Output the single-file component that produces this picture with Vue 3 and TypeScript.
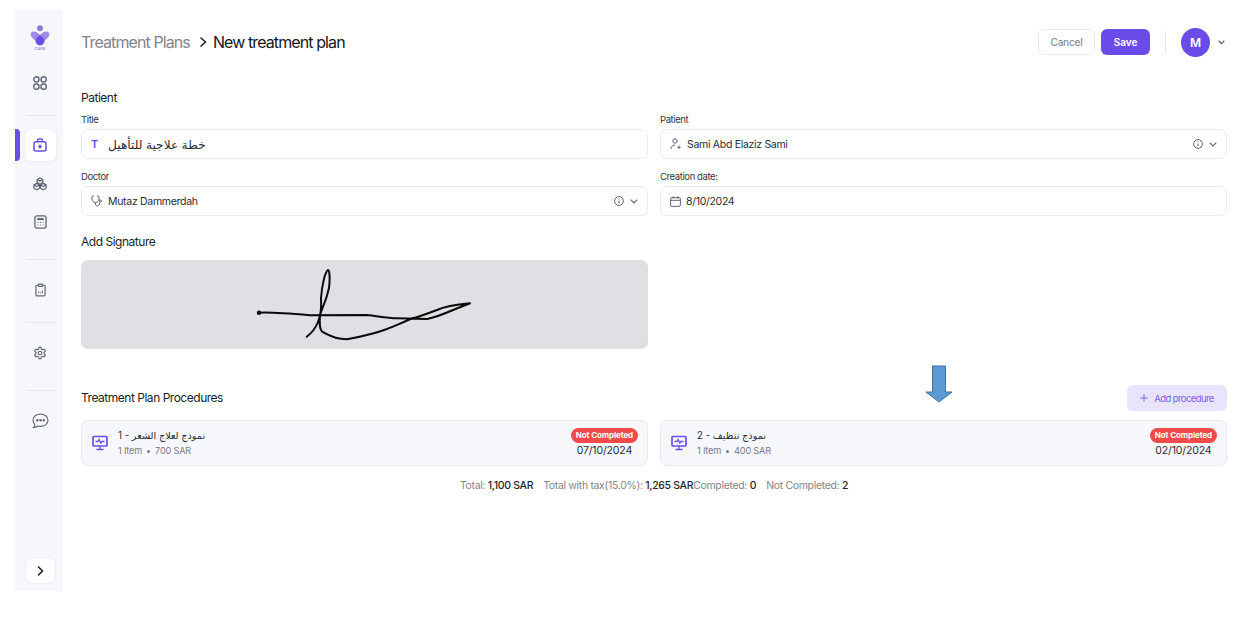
<script setup lang="ts">
interface Procedure {
  title: string
  meta: string
  date: string
}

const procedures: Procedure[] = [
  { title: 'نموذج لعلاج الشعر - 1', meta: '700 SAR', date: '07/10/2024' },
  { title: 'نموذج تنظيف - 2', meta: '400 SAR', date: '02/10/2024' }
]
</script>

<template>
  <div class="page">
    <aside class="sidebar">
      <svg class="logo" width="20" height="25" viewBox="0 0 20 25">
        <circle cx="10" cy="3.200" r="3" fill="#8f7ad8" />
        <path d="M.6 8.600C1.500 6.300 5 6 7 7.500c1.200.8 2.200 1.500 3 2.300-2.200 1.800-3.800 3.400-4.200 5.700C3 14.300.2 11.500.6 8.600Z" fill="#a08ae6" />
        <path d="M19.400 8.600C18.500 6.300 15 6 13 7.500c-1.200.8-2.200 1.500-3 2.300 2.200 1.800 3.800 3.400 4.200 5.700 2.800-1.200 5.600-4 5.200-6.900Z" fill="#a08ae6" />
        <path d="M10 9.800c2.400 2 4.600 3.700 4.600 6a4.600 4.600 0 0 1-9.200 0c0-2.300 2.200-4 4.600-6Z" fill="#6a4de8" />
        <text x="10" y="24.500" text-anchor="middle" class="logo-text">CARE</text>
      </svg>

      <svg class="nav-icon grid-icon" width="14" height="14" viewBox="0 0 14 14">
        <g fill="none" stroke="#5f6472" stroke-width="1.400">
          <circle cx="3.400" cy="3.400" r="2.600" />
          <circle cx="10.600" cy="3.400" r="2.600" />
          <rect x=".8" y="8" width="5.200" height="5.200" rx="2.200" />
          <rect x="8" y="8" width="5.200" height="5.200" rx="2.200" />
        </g>
      </svg>
      <div class="divider"></div>

      <div class="active-item">
        <span class="active-bar"></span>
        <div class="active-tile">
          <svg width="14" height="14" viewBox="0 0 14 14" fill="none" stroke="#6a4de8" stroke-width="1.500">
            <rect x="1" y="3.700" width="12" height="9.300" rx="2" />
            <path d="M4.500 3.500V2.300C4.500 1.500 5 1 5.800 1h2.400c.8 0 1.300.5 1.300 1.300v1.200" />
            <path d="M7 6.500v4M5 8.500h4" stroke-width="1.400" />
          </svg>
        </div>
      </div>

      <svg class="nav-icon boxes" width="16" height="15" viewBox="0 0 17 16" fill="none" stroke="#5f6472" stroke-width="1.300">
        <path d="M8.500 1 11.500 2.700v3.300L8.500 7.700 5.500 6V2.700L8.500 1Z" />
        <path d="M5 6.800 8 8.500v3.400L5 13.600 2 11.900V8.500L5 6.800ZM12 6.800l3 1.700v3.400l-3 1.700-3-1.700V8.500l3-1.700Z" />
        <path d="M5.500 2.700 8.500 4.400l3-1.700M2 8.500 5 10.200 8 8.500M9 8.500l3 1.700 3-1.700" />
      </svg>

      <svg class="nav-icon calc" width="13" height="14" viewBox="0 0 14 15" fill="none" stroke="#5f6472" stroke-width="1.400">
        <rect x="1" y="1" width="12" height="13" rx="2.200" />
        <rect x="3.500" y="3.300" width="7" height="2.200" fill="#5f6472" stroke="none" />
        <path d="M3.800 8h1M6.500 8h1M9.200 8h1M3.800 10.800h1M6.500 10.800h1M9.200 10.800h1" stroke-width="1.200" />
      </svg>
      <div class="divider wide-divider"></div>

      <svg class="nav-icon after-divider" width="11" height="14" viewBox="0 0 12 15" fill="none" stroke="#5f6472" stroke-width="1.300">
        <path d="M3.500 2.300H2.200C1.400 2.300 1 2.800 1 3.500v9.300c0 .8.400 1.200 1.200 1.200h7.600c.8 0 1.200-.4 1.200-1.200V3.500c0-.7-.4-1.200-1.200-1.200H8.500" />
        <rect x="3.500" y="1" width="5" height="2.600" rx="1" />
        <path d="M4 11V9M6 11V10M8 11V8" stroke-width="1.100" />
      </svg>
      <div class="divider"></div>

      <svg class="nav-icon after-divider" width="14" height="14" viewBox="0 0 24 24" fill="none" stroke="#5f6472" stroke-width="2">
        <path d="M12.220 2h-.44a2 2 0 0 0-2 2v.18a2 2 0 0 1-1 1.730l-.43.250a2 2 0 0 1-2 0l-.150-.080a2 2 0 0 0-2.730.730l-.220.380a2 2 0 0 0 .730 2.730l.150.100a2 2 0 0 1 1 1.720v.510a2 2 0 0 1-1 1.740l-.150.090a2 2 0 0 0-.730 2.730l.220.380a2 2 0 0 0 2.730.730l.150-.080a2 2 0 0 1 2 0l.430.250a2 2 0 0 1 1 1.730V20a2 2 0 0 0 2 2h.44a2 2 0 0 0 2-2v-.180a2 2 0 0 1 1-1.730l.430-.250a2 2 0 0 1 2 0l.150.080a2 2 0 0 0 2.730-.730l.220-.390a2 2 0 0 0-.730-2.730l-.150-.080a2 2 0 0 1-1-1.740v-.500a2 2 0 0 1 1-1.740l.150-.090a2 2 0 0 0 .730-2.730l-.220-.380a2 2 0 0 0-2.730-.730l-.150.080a2 2 0 0 1-2 0l-.430-.250a2 2 0 0 1-1-1.730V4a2 2 0 0 0-2-2Z" />
        <circle cx="12" cy="12" r="3" />
      </svg>
      <div class="divider wide-divider"></div>

      <svg class="nav-icon chat" width="17" height="16" viewBox="0 0 17 16" fill="none" stroke="#5f6472" stroke-width="1.100">
        <path d="M8.500 1C4.400 1 1 3.700 1 7.200c0 1.600.7 3 1.900 4.100-.1 1.200-.6 2.500-1.400 3.200 1.700 0 3.200-.6 4.200-1.500.9.300 1.800.4 2.800.4 4.100 0 7.500-2.700 7.500-6.200S12.600 1 8.500 1Z" />
        <circle cx="5.300" cy="7.200" r=".7" fill="#5f6472" />
        <circle cx="8.500" cy="7.200" r=".7" fill="#5f6472" />
        <circle cx="11.700" cy="7.200" r=".7" fill="#5f6472" />
      </svg>

      <button class="expand" type="button">
        <svg width="10" height="10" viewBox="0 0 10 10" fill="none" stroke="#1d1f26" stroke-width="1.600" stroke-linecap="round" stroke-linejoin="round">
          <path d="M3.500 1l4 4-4 4" />
        </svg>
      </button>
    </aside>

    <main class="main">
      <header class="topbar">
        <div class="crumbs">
          <span class="crumb-parent">Treatment Plans</span>
          <svg class="crumb-sep" width="10" height="12" viewBox="0 0 10 12" fill="none" stroke="#1d1f26" stroke-width="1.500">
            <path d="M2.500 1.500 7.500 6l-5 4.500" />
          </svg>
          <span class="crumb-current">New treatment plan</span>
        </div>
        <div class="actions">
          <button class="btn btn-cancel" type="button">Cancel</button>
          <button class="btn btn-save" type="button">Save</button>
          <span class="action-sep"></span>
          <span class="avatar">M</span>
          <svg width="7" height="5" viewBox="0 0 7 5" fill="none" stroke="#5f6472" stroke-width="1.300">
            <path d="M.7.800 3.500 3.600 6.300.8" />
          </svg>
        </div>
      </header>

      <h2 class="section-title patient-title">Patient</h2>
      <div class="form-grid patient-grid">
        <div class="field">
          <label>Title</label>
          <div class="input">
            <span class="t-icon">T</span>
            <span class="arabic-value">خطة علاجية للتأهيل</span>
          </div>
        </div>
        <div class="field">
          <label>Patient</label>
          <div class="input">
            <svg class="lead" width="12" height="12" viewBox="0 0 12 12" fill="none" stroke="#5f6472" stroke-width="1">
              <circle cx="5" cy="3" r="2.200" />
              <path d="M1 11c0-2.300 1.500-4 4-4M9 7.500v3.500M7.300 9.300h3.400" />
            </svg>
            <span class="value">Sami Abd Elaziz Sami</span>
            <svg class="info" width="10" height="10" viewBox="0 0 10 10" fill="none" stroke="#5f6472" stroke-width="1">
              <circle cx="5" cy="5" r="4.400" />
              <path d="M5 4.500v2.700M5 2.600v.8" />
            </svg>
            <svg class="chev" width="8" height="5" viewBox="0 0 8 5" fill="none" stroke="#5f6472" stroke-width="1.100">
              <path d="M.7.700 4 4 7.300.7" />
            </svg>
          </div>
        </div>
        <div class="field">
          <label>Doctor</label>
          <div class="input">
            <svg class="lead" width="12" height="12" viewBox="0 0 12 12" fill="none" stroke="#5f6472" stroke-width="1">
              <path d="M3 1H2C1.400 1 1 1.400 1 2v2c0 2 1.500 3.500 3.500 3.500S8 6 8 4V2c0-.6-.4-1-1-1H6" />
              <path d="M4.500 7.500V9c0 1.300 1 2 2 2s2-.7 2-2V7.500" />
              <circle cx="9.500" cy="6" r="1" />
            </svg>
            <span class="value">Mutaz Dammerdah</span>
            <svg class="info" width="10" height="10" viewBox="0 0 10 10" fill="none" stroke="#5f6472" stroke-width="1">
              <circle cx="5" cy="5" r="4.400" />
              <path d="M5 4.500v2.700M5 2.600v.8" />
            </svg>
            <svg class="chev" width="8" height="5" viewBox="0 0 8 5" fill="none" stroke="#5f6472" stroke-width="1.100">
              <path d="M.7.700 4 4 7.300.7" />
            </svg>
          </div>
        </div>
        <div class="field">
          <label>Creation date:</label>
          <div class="input">
            <svg class="lead" width="11" height="11" viewBox="0 0 11 11" fill="none" stroke="#5f6472" stroke-width="1">
              <rect x=".6" y="1.600" width="9.800" height="8.800" rx="1.500" />
              <path d="M.6 4.300h9.800M3.200.3v2.300M7.800.3v2.300" />
            </svg>
            <span class="value">8/10/2024</span>
          </div>
        </div>
      </div>

      <h2 class="section-title signature-title">Add Signature</h2>
      <div class="form-grid">
        <div class="signature">
          <svg width="566" height="89" viewBox="0 0 566 89" fill="none" stroke="#0a0a0a" stroke-width="2" stroke-linejoin="round" stroke-linecap="round">
            <path d="M178 52.700C190 52 203 53 229 55.300L286 55C296 56 306 58 316 58.300L346 59C356 57 365 53 372 50L389 43.300C382 44 365 46 356 50 348 53 340 56 332 58.300 322 62 314 66 306 69 298 72 289 75 266 79.300 258 79 252 78 241 71.700 238 68 238.500 62 239 55 241 48 245 42 248 28 249.500 15 248 10 247 10 244 12 241 25 240 38 240.500 46 240 55 237 62 235 67 232 72 225.700 76.700" />
            <circle cx="178" cy="52.700" r="1.200" fill="#0a0a0a" />
          </svg>
        </div>
      </div>

      <div class="procedures-head">
        <h2 class="section-title">Treatment Plan Procedures</h2>
        <button class="btn-add" type="button">
          <svg width="8" height="8" viewBox="0 0 8 8" fill="none" stroke="#7a60ee" stroke-width="1">
            <path d="M4 .5v7M.5 4h7" />
          </svg>
          Add procedure
        </button>
      </div>

      <div class="form-grid">
        <div v-for="item in procedures" :key="item.date" class="proc-card">
          <svg class="proc-icon" width="16" height="16" viewBox="0 0 16 16" fill="none" stroke="#6a4de8" stroke-width="1.700">
            <rect x="1" y="1.500" width="14" height="9.500" rx="1" />
            <path d="M3.500 6.500H6L7 4.500 8.800 8 10 6.500h2.500M8 11v3M4.500 14.500h7" stroke-width="1.300" />
          </svg>
          <div class="proc-text">
            <div class="proc-title">{{ item.title }}</div>
            <div class="proc-meta">
              <span>1 Item</span>
              <span class="dot"></span>
              <span>{{ item.meta }}</span>
            </div>
          </div>
          <div class="proc-side">
            <span class="badge">Not Completed</span>
            <span class="proc-date">{{ item.date }}</span>
          </div>
        </div>
      </div>

      <div class="summary">
        <span>Total: <b>1,100 SAR</b></span>
        <span class="sum-item">Total with tax(15.0%): <b>1,265 SAR</b></span>
        <span>Completed: <b>0</b></span>
        <span class="sum-item">Not Completed: <b>2</b></span>
      </div>
    </main>

    <svg class="callout-arrow" width="28" height="38" viewBox="0 0 28 38">
      <path d="M7.500 1h13v26H27L14 37 1 27h6.500V1Z" fill="#5b9bd5" stroke="#41719c" stroke-width="1" />
    </svg>
  </div>
</template>

<style scoped>
.page {
  position: relative;
  display: flex;
  align-items: flex-start;
  width: 1253px;
  height: 622px;
  padding: 10px 0 0 15px;
  box-sizing: border-box;
  overflow: hidden;
  background: #fff;
  color: #1d1f26;
  font-family: Inter, "DejaVu Sans", sans-serif;
}

.sidebar {
  display: flex;
  flex-direction: column;
  align-items: center;
  width: 48px;
  height: 581px;
  padding: 15px 0 0 2px;
  box-sizing: border-box;
  background: #f6f7fb;
}

.logo {
  flex-shrink: 0;
}

.logo-text {
  font-size: 4px;
  font-weight: 600;
  fill: #9d8be0;
  stroke: none;
}

.nav-icon {
  display: block;
  flex-shrink: 0;
}

.grid-icon {
  margin-top: 26px;
}

.divider {
  flex-shrink: 0;
  width: 29px;
  height: 1px;
  margin-top: 25px;
  background: #e4e5ea;
}

.wide-divider {
  margin-top: 30px;
}

.after-divider {
  margin-top: 23px;
}

.chat {
  margin-top: 22px;
}

.active-item {
  position: relative;
  display: flex;
  justify-content: center;
  width: 100%;
  margin-top: 13px;
}

.active-bar {
  position: absolute;
  left: -2px;
  top: 0;
  width: 5px;
  height: 32px;
  border-radius: 0 4px 4px 0;
  background: #6a4de8;
}

.active-tile {
  display: flex;
  align-items: center;
  justify-content: center;
  width: 31px;
  height: 32px;
  border-radius: 7px;
  background: #fff;
  box-shadow: 0 1px 5px rgba(40, 40, 80, 0.06);
}

.boxes {
  margin-top: 16px;
}

.calc {
  margin-top: 23px;
}

.expand {
  display: flex;
  align-items: center;
  justify-content: center;
  flex-shrink: 0;
  width: 31px;
  height: 27px;
  margin-top: auto;
  margin-bottom: 7px;
  padding: 0;
  border: 1px solid #eceef2;
  border-radius: 8px;
  background: #fff;
}

.main {
  width: 1146px;
  margin-left: 18px;
}

.topbar {
  display: flex;
  align-items: center;
  justify-content: space-between;
  height: 32px;
  margin-top: 16px;
}

.crumbs {
  display: flex;
  align-items: center;
  gap: 8px;
  font-size: 16px;
  letter-spacing: -0.9px;
}

.crumb-sep {
  margin-right: -3px;
}

.crumb-parent {
  color: #83858c;
}

.crumb-current {
  color: #16171c;
}

.actions {
  display: flex;
  align-items: center;
}

.btn {
  height: 26px;
  border-radius: 6px;
  font-family: inherit;
  font-size: 10px;
  font-weight: 500;
}

.btn-cancel {
  width: 57px;
  border: 1.500px solid #e9eaee;
  background: #fff;
  color: #8a8d96;
  letter-spacing: -0.2px;
}

.btn-save {
  width: 49px;
  margin-left: 6px;
  border: 0;
  background: #6a4de8;
  color: #fff;
  font-weight: 600;
}

.action-sep {
  width: 1px;
  height: 24px;
  margin: 0 15px;
  background: #e6e7eb;
}

.avatar {
  display: flex;
  align-items: center;
  justify-content: center;
  width: 29px;
  height: 29px;
  margin-right: 8px;
  border-radius: 50%;
  background: #6a4de8;
  color: #fff;
  font-size: 12px;
  font-weight: 600;
}

.actions > svg {
  margin-right: 2px;
}

.section-title {
  margin: 0;
  font-size: 12px;
  font-weight: 400;
  line-height: 16px;
  letter-spacing: -0.48px;
}

.patient-title {
  margin-top: 32px;
}

.form-grid {
  display: grid;
  grid-template-columns: 567px 567px;
  gap: 12px;
}

.patient-grid {
  margin-top: 8px;
}

.field label {
  display: block;
  margin-bottom: 3px;
  font-size: 9.500px;
  line-height: 12px;
  letter-spacing: -0.4px;
  color: #33353c;
}

.input {
  display: flex;
  align-items: center;
  height: 30px;
  padding: 0 8px 0 9px;
  box-sizing: border-box;
  border: 1px solid #e9eaee;
  border-radius: 7px;
  font-size: 10.500px;
  letter-spacing: -0.3px;
  color: #2a2c33;
}

.lead {
  flex-shrink: 0;
  margin-right: 4px;
}

.t-icon {
  width: 17px;
  color: #6a4de8;
  font-size: 11px;
  font-weight: 600;
}

.value {
  flex: 1;
  margin-left: 1px;
}

.arabic-value {
  font-size: 12.200px;
  letter-spacing: 0;
}

.info {
  margin-right: 6px;
}

.chev {
  margin-right: 1px;
}

.signature-title {
  margin-top: 18px;
  margin-bottom: 10px;
}

.signature {
  height: 89px;
  border-radius: 7px;
  background: #dfe0e4;
}

.signature svg {
  display: block;
}

.procedures-head {
  display: flex;
  align-items: center;
  justify-content: space-between;
  margin-top: 36px;
  margin-bottom: 9px;
}

.btn-add {
  display: flex;
  align-items: center;
  justify-content: center;
  gap: 6px;
  width: 100px;
  height: 26px;
  padding: 0;
  border: 0;
  border-radius: 6px;
  background: #e9e4fb;
  color: #7a60ee;
  font-family: inherit;
  font-size: 9.500px;
  letter-spacing: -0.6px;
}

.proc-card {
  display: flex;
  align-items: center;
  height: 46px;
  padding: 0 9px 0 10px;
  box-sizing: border-box;
  border: 1px solid #e9eaee;
  border-radius: 7px;
  background: #f6f7fb;
}

.proc-icon {
  flex-shrink: 0;
}

.proc-text {
  flex: 1;
  margin-left: 10px;
}

.proc-title {
  font-size: 9.700px;
  line-height: 16px;
  color: #2a2c33;
}

.proc-meta {
  display: flex;
  align-items: center;
  gap: 5px;
  font-size: 9.200px;
  line-height: 14px;
  letter-spacing: -0.2px;
  color: #777a84;
}

.dot {
  width: 3px;
  height: 3px;
  border-radius: 50%;
  background: #777a84;
}

.proc-side {
  display: flex;
  flex-direction: column;
  align-items: center;
}

.badge {
  padding: 0 5px;
  border-radius: 9px;
  background: #f04a4a;
  color: #fff;
  font-size: 8px;
  font-weight: 700;
  line-height: 15px;
  letter-spacing: -0.1px;
}

.proc-date {
  margin-top: 1px;
  font-size: 10.500px;
  line-height: 14px;
  letter-spacing: -0.15px;
  color: #2a2c33;
}

.summary {
  display: flex;
  justify-content: center;
  margin-top: 13px;
  font-size: 10.500px;
  line-height: 14px;
  letter-spacing: -0.33px;
  color: #83858c;
}

.sum-item {
  margin-left: 10px;
}

.sum-item + span:not(.sum-item) {
  margin-left: 0;
}

.sum-item b,
.summary b {
  font-weight: 500;
  color: #1d1f26;
}

.callout-arrow {
  position: absolute;
  left: 925px;
  top: 365px;
}
</style>

<style>
html,
body {
  margin: 0;
  background: #fff;
}
</style>
